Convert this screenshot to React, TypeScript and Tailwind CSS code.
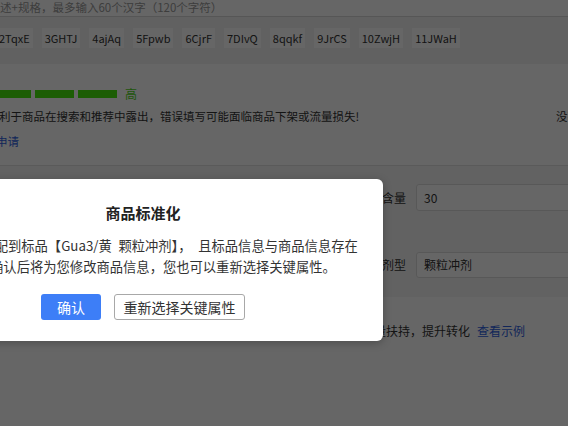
import { Fragment } from "react";

const tags = ["2TqxE", "3GHTJ", "4ajAq", "5Fpwb", "6CjrF", "7DIvQ", "8qqkf", "9JrCS", "10ZwjH", "11JWaH"];

function StandardizeModal() {
  return (
    <div className="absolute left-[-97px] top-[179px] w-[480px] h-[162px] bg-white rounded-[6px] shadow-[0_2px_8px_rgba(0,0,0,0.25)] flex flex-col items-center pt-[23px]">
      <h2 className="text-[15px] leading-[22px] font-bold text-[#222]">商品标准化</h2>

      <div className="mt-[11px] text-[13.3px] leading-[21px] text-[#333] text-center whitespace-nowrap">
        <p>您的商品匹配到标品【Gua3/黄{"\u2002"}颗粒冲剂】，{"\u2002"}且标品信息与商品信息存在</p>
        <p>差异，确认后将为您修改商品信息，您也可以重新选择关键属性。</p>
      </div>

      <div className="mt-[17px] flex items-center gap-[13px]">
        <button className="w-[60px] h-[26px] rounded-[3px] bg-[#3d7ef7] text-white text-[14px] leading-[26px]">
          确认
        </button>
        <button className="w-[131px] h-[26px] rounded-[3px] border border-[#a8a8a8] bg-white text-[#333] text-[14px] leading-[24px]">
          重新选择关键属性
        </button>
      </div>
    </div>
  );
}

export default function App() {
  return (
    <div className="relative w-[568px] h-[426px] overflow-hidden bg-white font-['Noto_Sans_CJK_SC',sans-serif] text-[11.5px] text-[#333]">
      {/* title input */}
      <div className="h-[17px] border-b border-[#d6d6d6] leading-[15px] text-[#9a9a9a] whitespace-nowrap">
        述+规格，最多输入60个汉字（120个字符）
      </div>

      {/* suggested keywords */}
      <div className="h-[47px] bg-[#f2f2f2] pt-[11px]">
        <div className="flex gap-[9px] ml-[-4px] whitespace-nowrap">
          {tags.map((t) => (
            <span key={t} className="h-[20px] px-[3px] bg-white text-[11px] leading-[20px] text-[#333]">
              {t}
            </span>
          ))}
        </div>
      </div>

      {/* title quality */}
      <div className="h-[102px] border-b border-[#e2e2e2] pt-[22px]">
        <div className="flex items-center h-[16px] ml-[-8px]">
          <div className="flex gap-[4px]">
            {[0, 1, 2].map((i) => (
              <Fragment key={i}>
                <div className="w-[39px] h-[8px] bg-[#46e80c]" />
              </Fragment>
            ))}
          </div>
          <span className="ml-[8px] text-[12px] text-[#4fd623] leading-[16px]">高</span>
        </div>
        <div className="mt-[5px] flex whitespace-nowrap leading-[18px]">
          <div className="w-[557px] shrink-0 ml-[-1px]">利于商品在搜索和推荐中露出，错误填写可能面临商品下架或流量损失!</div>
          <div>没有找到</div>
        </div>
        <div className="mt-[7px] ml-[-4px] leading-[18px] text-[#2f5fe0]">申请</div>
      </div>

      {/* key attributes */}
      <div className="h-[131px] bg-[#f6f6f6] pt-[18px] text-[12px]">
        <div className="flex items-center">
          <div className="w-[416px] shrink-0 pr-[10px] text-right">规格含量</div>
          <div className="w-[200px] shrink-0 h-[27px] rounded-[3px] border border-[#dcdcdc] bg-white px-[7px] leading-[25px]">30</div>
        </div>
        <div className="mt-[41px] flex items-center">
          <div className="w-[416px] shrink-0 pr-[10px] text-right">药品剂型</div>
          <div className="w-[200px] shrink-0 h-[26px] rounded-[3px] border border-[#dcdcdc] bg-white px-[7px] leading-[24px]">颗粒冲剂</div>
        </div>
      </div>

      {/* detail tip */}
      <div className="pt-[25px] pl-[230px] text-[12px] leading-[18px] whitespace-nowrap">
        <span>完善商品详情可获得更多流量扶持，提升转化</span>
        <span className="ml-[7px] text-[#2f5fe0]">查看示例</span>
      </div>

      {/* mask */}
      <div className="absolute inset-0 bg-black/60" />

      <StandardizeModal />
    </div>
  );
}
